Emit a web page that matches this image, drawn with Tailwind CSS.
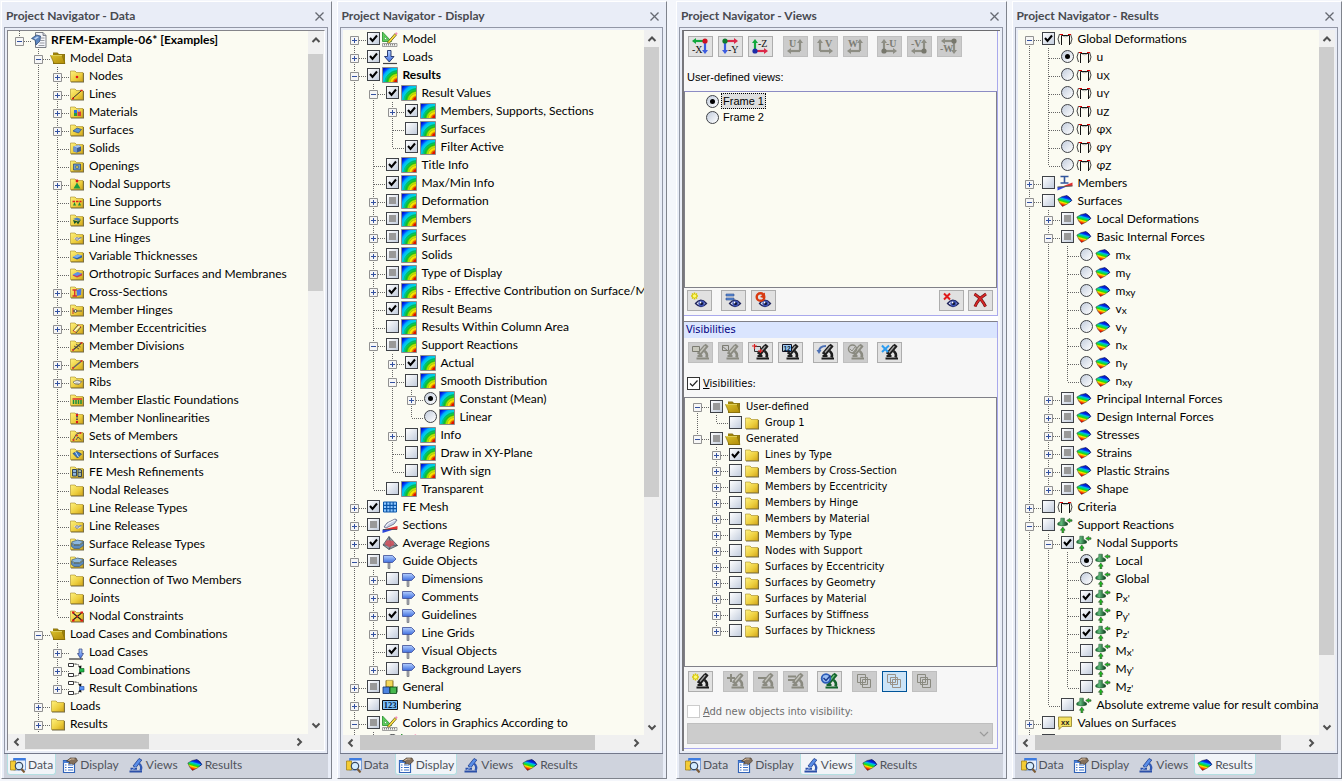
<!DOCTYPE html>
<html lang="en">
<head>
<meta charset="utf-8">
<title>Project Navigator</title>
<script src="https://cdn.jsdelivr.net/npm/@tailwindcss/browser@4"></script>
</head>
<body class="flex h-screen min-h-[400px] gap-2 overflow-hidden bg-[#f4f6fb] pt-px pb-[2px] font-['Lato',sans-serif] text-[12px] text-black">

<svg class="absolute h-0 w-0" aria-hidden="true">
  <defs>
    <linearGradient id="gFold" x1="0" y1="0" x2="1" y2="1"><stop offset="0" stop-color="#fff27e"/><stop offset=".6" stop-color="#eccd3c"/><stop offset="1" stop-color="#d0a41c"/></linearGradient>
    <linearGradient id="gOpen" x1="0" y1="0" x2="1" y2="1"><stop offset="0" stop-color="#d9c02a"/><stop offset="1" stop-color="#b08a08"/></linearGradient>
    <radialGradient id="gRain" gradientUnits="userSpaceOnUse" cx="16" cy="16" r="20"><stop offset=".18" stop-color="#e01000"/><stop offset=".24" stop-color="#ff9000"/><stop offset=".32" stop-color="#f8e800"/><stop offset=".42" stop-color="#d8e800"/><stop offset=".5" stop-color="#30d010"/><stop offset=".6" stop-color="#00c860"/><stop offset=".68" stop-color="#00d8d8"/><stop offset=".8" stop-color="#00b0ff"/><stop offset=".88" stop-color="#0050ff"/><stop offset="1" stop-color="#0010d0"/></radialGradient>
    <linearGradient id="gLeaf" x1=".66" y1="0" x2=".3" y2="1"><stop offset=".14" stop-color="#0018d8"/><stop offset=".26" stop-color="#0040f0"/><stop offset=".34" stop-color="#00b8e8"/><stop offset=".46" stop-color="#00d870"/><stop offset=".56" stop-color="#30d800"/><stop offset=".66" stop-color="#f8e800"/><stop offset=".78" stop-color="#ff6000"/><stop offset=".9" stop-color="#e80000"/></linearGradient>
    <linearGradient id="gBlue" x1="0" y1="0" x2="0" y2="1"><stop offset="0" stop-color="#b4d0ff"/><stop offset="1" stop-color="#3f6ede"/></linearGradient>
    <linearGradient id="gGreen" x1="0" y1="0" x2="1" y2="0"><stop offset="0" stop-color="#1c7438"/><stop offset=".35" stop-color="#62bc7c"/><stop offset="1" stop-color="#0c3c1c"/></linearGradient>
  </defs>
  <symbol id="fold" viewBox="0 0 16 16"><path d="M2 14.500V3.500h4.500l1.500 1.500h7v9.500z" fill="#6f6746"/><path d="M1.500 13.500V3h4.500l1.500 1.500h6.500v9z" fill="url(#gFold)" stroke="#a58a26" stroke-width=".6"/></symbol>
  <symbol id="open" viewBox="0 0 16 16"><path d="M3 14V2.500h4.500L9 4h6v10z" fill="#85701a"/><path d="M3 3h4l1.500 1.500H14L15 13H4z" fill="#9d8208"/><path d="M.5 5.500h11.500L15 13.500H4z" fill="url(#gOpen)" stroke="#7d6606" stroke-width=".6"/><path d="M1 5.500h11" stroke="#efe26a" stroke-width=".8"/></symbol>
  <symbol id="rain" viewBox="0 0 16 16"><path d="M.5.5h15v15H.5z" fill="url(#gRain)" stroke="#8c8c8c"/><path d="M2.500 15A14 13 0 0 1 15 3.500M5 15A11 10 0 0 1 15 6M8 15a8 7.500 0 0 1 7-6.500" fill="none" stroke="#065c50" stroke-width=".5" opacity=".5"/><path d="M11 15a5 4.500 0 0 1 4-3.500" fill="none" stroke="#9a5200" stroke-width=".6" opacity=".7"/></symbol>
  <symbol id="leaf" viewBox="0 0 16 16"><path d="M.8 6Q5 2.800 9.500 2.500 13 4 14.700 7.500 10.500 11.500 5.500 13.500 2.200 10.500.8 6z" fill="url(#gLeaf)" stroke="#38382c" stroke-width=".5"/><path d="M9.500 2.500Q13 4 14.700 7.500L12.500 9.300" fill="none" stroke="#0a1a90" stroke-width=".9"/></symbol>
  <symbol id="model" viewBox="0 0 16 16"><path d="M.5 1v9.500h9z" fill="#5ccf5a" stroke="#238a28" stroke-width=".8"/><path d="M2.500 5.500v3h3z" fill="#fff" stroke="#238a28" stroke-width=".5"/><path d="M6 10.500 13 2.500l1.500 1.500-7 8-2 .8z" fill="#ffe23e" stroke="#4c400e" stroke-width=".7"/><path d="m13 2.500 1-1.200q1.500 0 1.600 1.500l-1 1.200z" fill="#f78bb8"/><path d="M.5 12.500h14.500v3H.5z" fill="#f0f0ec" stroke="#7c7c7c" stroke-width=".7"/><path d="M2.500 13v1.500m2-1.500v1.500m2-1.500v1.500m2-1.500v1.500m2-1.500v1.500m2-1.500v1.500" stroke="#555" stroke-width=".7"/></symbol>
  <symbol id="loads" viewBox="0 0 16 16"><path d="M5.500 1.500h3.500v6h3l-4.700 5.500L2.500 7.500h3z" fill="url(#gBlue)" stroke="#1c2e66" stroke-width=".9"/><path d="M1 14.500h14" stroke="#444" stroke-width="1.200"/></symbol>
  <symbol id="mesh" viewBox="0 0 16 16"><path d="M1.500 3h13v10h-13z" fill="#8fc8ff" stroke="#0a56a8"/><path d="M4.700 3v10m3.300-10v10m3.200-10v10M1.500 6.300h13m-13 3.300h13" stroke="#0a56a8" stroke-width="1.200"/></symbol>
  <symbol id="sect" viewBox="0 0 16 16"><path d="m2 10 3-4 8-4 2 1-3 4-8 4z" fill="#c8d0e8" stroke="#5a607c" stroke-width=".8"/><path d="m4 9.500 2-3 7-3.500" fill="none" stroke="#fff"/><path d="M1 12.500 15.500 9v3.500z" fill="#e03030"/><path d="M.5 16v-3.500h11z" fill="#2c48d8"/><path d="M1 12.500h14" stroke="#333" stroke-width=".7"/></symbol>
  <symbol id="avg" viewBox="0 0 16 16"><path d="M7 1.500 1 10l6 4.500 8.500-4z" fill="#8e98a4" stroke="#39424c" stroke-width=".7"/><path d="m7 1.500 2 8.500-2 4.500M1 10l8 0 6.500.5" fill="none" stroke="#39424c" stroke-width=".7"/><path d="m4.500 5.500 3-.2 4 1 .8 3.500-5 2.500-4.500-3z" fill="#d4505c" opacity=".85"/></symbol>
  <symbol id="sign" viewBox="0 0 16 16"><path d="M6 8h2v7.500H6z" fill="#a8acb4" stroke="#62666e" stroke-width=".6"/><path d="M1.500 2.500h9l3.500 3.500-3.500 3.500h-9z" fill="url(#gBlue)" stroke="#3c4c94" stroke-width=".8"/></symbol>
  <symbol id="general" viewBox="0 0 16 16"><path d="M4 1.500h7v6.500H4z" fill="#f4d858" stroke="#6a5408" stroke-width=".8"/><path d="m4 1.500 1.500-1h7l-1.500 1z" fill="#fff3a8"/><path d="M1 8h6.500v6.500H1z" fill="#4c84e0" stroke="#12306e" stroke-width=".8"/><path d="M8 8h6.500v6.500H8z" fill="#46b84e" stroke="#0e4c18" stroke-width=".8"/><path d="M14.500 8l1-1v6l-1 1.500z" fill="#0e4c18"/></symbol>
  <symbol id="num" viewBox="0 0 16 16"><path d="M.5 3.500h15v9H.5z" fill="#7cc0f8" stroke="#111" stroke-width="1"/></symbol>
  <symbol id="deform" viewBox="0 0 16 16"><path d="M4.500 14V4.500h8V14" fill="none" stroke="#111"/><path d="M2.500 3Q-.5 8 2.500 13M13.500 3q3 5 0 10" fill="none" stroke="#333" stroke-width=".9"/><path d="M6 5.200Q8.500 6.500 11 5.200" fill="none" stroke="#777" stroke-width=".6"/><path d="M3 3.500h3M11 3.500h3" stroke="#e00000"/></symbol>
  <symbol id="memb" viewBox="0 0 16 16"><path d="M3.500 1.500h8m-4 0v6m-4 .5h8" stroke="#31559c" stroke-width="1.600" fill="none"/><path d="M15.500 7.500v3.500h-9z" fill="#e03030"/><path d="M.5 15.500V12h8z" fill="#3048e0"/><path d="M.5 12 15.500 11" stroke="#555"/></symbol>
  <symbol id="supp" viewBox="0 0 16 16"><path d="M3.800 1.200h3.600v3L10.500 6v2Q6 10 .8 8V6l3-1.800z" fill="url(#gGreen)" stroke="#174c24" stroke-width=".5"/><path d="M15 2.800h-2.200V1.400L9.700 3.500l3.100 2.100V4.300H15z" fill="#18c018" stroke="#3c5c3c" stroke-width=".7"/><path d="M5 16v-2.800H3.500L5.800 10l2.300 3.200H6.700V16z" fill="#18c018" stroke="#3c5c3c" stroke-width=".7"/></symbol>
  <symbol id="vals" viewBox="0 0 16 16"><path d="M1.500 2h13v9.500H5L2 14.500v-3h-.5z" fill="#f4e060" stroke="#8c7c24" stroke-width=".8"/></symbol>
  <symbol id="root" viewBox="0 0 16 16"><path d="M4.500.5h7.500l3 3v12H4.500z" fill="#f4f6fa" stroke="#6c7078" stroke-width=".9"/><path d="M12 .5v3h3" fill="#c8ccd4" stroke="#6c7078" stroke-width=".8"/><path d="M10 6h3.500m-4 2.500h4m-5 2.500h5m-6 2.500h6" stroke="#80848c" stroke-width=".8"/><path d="m.5 6.500 5-3.500 4 1-.5 5-4 4-1-5z" fill="#5c86c0" stroke="#2c4670" stroke-width=".7"/><path d="m3 6.500 3-2 2 .5-3.500 2.500z" fill="#bcd4f4"/></symbol>
  <symbol id="lcase" viewBox="0 0 16 16"><path d="M0 15h14" stroke="#333" stroke-width="1.200"/><path d="M10 5h3v4.500h1.500L11.500 14.500 8.500 9.500H10z" fill="url(#gBlue)" stroke="#2c3c78" stroke-width=".7"/></symbol>
  <symbol id="lcomb" viewBox="0 0 16 16" overflow="visible"><path d="M-.5 1.500h5v3h-5zm0 10h5v3h-5z" fill="#fff" stroke="#222" stroke-width=".9"/><path d="M5.500 2q5 0 6 4M5.500 14q5 0 6-4" fill="none" stroke="#222" stroke-dasharray="2 1"/><path d="m9 4.500 3 2.500.5-3.500zm0 7L12 9l.5 3.500z" fill="#111"/><path d="M10.500 6.500h4.500v3.500h-4.500z" fill="#22b84a" stroke="#0a5a1c" stroke-width=".6"/></symbol>
  <symbol id="rcomb" viewBox="0 0 16 16" overflow="visible"><path d="M-.5 1.500h5v3h-5zm0 10h5v3h-5z" fill="#fff" stroke="#222" stroke-width=".9"/><path d="M5.500 2q5 0 6 4M5.500 14q5 0 6-4" fill="none" stroke="#222" stroke-dasharray="2 1"/><path d="m9 4.500 3 2.500.5-3.500zm0 7L12 9l.5 3.500z" fill="#111"/><path d="M10.500 6.500h4.500v3.500h-4.500z" fill="#5c94f4" stroke="#1c44a0" stroke-width=".6"/></symbol>
  <symbol id="tabData" viewBox="0 0 16 16"><path d="M3.500 1.500h12V13h-12z" fill="#eaf1fc" stroke="#5a8ad0" stroke-width=".8"/><path d="M3.500 1h12v2.500h-12z" fill="#3d7be0"/><path d="M.5 4h5v9h-5z" fill="#f4cc34" stroke="#9c7a10" stroke-width=".7"/><circle cx="9" cy="9" r="3.700" fill="#d4ecff" stroke="#3a4a62" stroke-width="1.200"/><path d="m11.500 12 3 3.500" stroke="#7c5a34" stroke-width="2"/></symbol>
  <symbol id="tabDisp" viewBox="0 0 16 16"><path d="M1.500 3.500h11v12h-11z" fill="#fff" stroke="#3264b8" stroke-width="1.200"/><path d="M1.500 4h11v2h-11z" fill="#4a80d8"/><path d="M3 8h1.500M6 8h5M3 10.500h1.500m1.500 0h5M3 13h1.500m1.500 0h5" stroke="#3c70c8"/><path d="m4.500 4 4-3 5.500 0 1.500 3-4 3.500-2-1-3 .5 1.500-2z" fill="#84705c" stroke="#3c3024" stroke-width=".6"/><path d="m6.500 3.500 3-1.500h3" fill="none" stroke="#d8bea0"/></symbol>
  <symbol id="tabView" viewBox="0 0 16 16"><path d="M5 9 11 1.500 13.800 3 8 10.500z" fill="#5a8ee8" stroke="#1e3c8c" stroke-width=".8"/><path d="M11 6.500q3.500 3 1.500 7" fill="none" stroke="#3058b4" stroke-width="2.200"/><path d="M1.500 14.500h12.500M2.500 11.800h6.500" stroke="#2c50a8" stroke-width="2"/><path d="m4 13 4-3" stroke="#88b0f0"/></symbol>
</svg>

<script>
/* ---------- folder overlays ---------- */
const overlays = {
  node: '<circle cx="8" cy="9" r="1.300" fill="#e01818"/>',
  line: '<path d="M4 12 12 5" stroke="#333"/><path d="M3 12.500h2M11.500 4.500h2" stroke="#e01818" stroke-width="1.600"/>',
  mat: '<path d="M5 6h3v3H5z" fill="#2c6ce0"/><path d="M5 9h3v3H5z" fill="#2c9c3c"/><path d="M8.500 7.500h3.500V12H8.500z" fill="#d83c3c"/><path d="M9 5.500h2v2H9z" fill="#7cb8f8"/>',
  surf: '<path d="m4 9 4-3 4.500 1.500L9.500 11z" fill="#5a94d8" stroke="#2c4c80" stroke-width=".7"/>',
  solid: '<path d="m4.500 6.500 5-1.500 2.500 1.500V11l-4 1.500-3.500-1z" fill="#3c5c94"/><path d="m4.500 6.500 5-1.500 2.500 1.500-4 1.500z" fill="#a8c4f0"/><path d="M8 8v4.500l-3.500-1v-5z" fill="#6c94d0"/>',
  opening: '<path d="M4.500 6h7v6h-7z" fill="#6c9cd4" stroke="#2c4468" stroke-width=".7"/><path d="M6.800 7.800h2.500v2.500H6.800z" fill="#f0dc5c" stroke="#2c4468" stroke-width=".6"/>',
  nsup: '<path d="M8 6.500 11.500 12.500h-7z" fill="#1c9c44"/><circle cx="8" cy="5" r="1.400" fill="#e01818"/>',
  lsup: '<path d="M3.500 7.500h9" stroke="#d82020" stroke-width="1.300" stroke-dasharray="2.500 1"/><path d="m5.500 8 1.500 3.500H4zM10.500 8l1.500 3.500H9z" fill="#1c8c3c"/>',
  ssup: '<path d="m4 7 4-1.500 4 1.500-2.500 2z" fill="#4c80c0"/><path d="m4 8 1.500 4 2-2 1.500 2.500L12 7.500 9 9.500z" fill="#14542c"/>',
  hinge: '<path d="m4.500 8 4-1 4 2-4 2z" fill="#dce0e8"/><circle cx="8" cy="9" r="1.300" fill="#fff" stroke="#556" stroke-width=".7"/><path d="m9.500 8.500 3-1" stroke="#5a7cc0" stroke-width="1.200"/>',
  thick: '<path d="m3.500 9.500 5-3 4.500 1v2L8 11.500z" fill="#2c60a8"/><path d="m3.500 9 5-2.500L13 7.500 8 10z" fill="#7cb0f0"/>',
  ortho: '<path d="m3.500 9.500 5-3 4.500 1v2L8 11.500z" fill="#c83c58"/><path d="m3.500 8.500 5-2.500L13 7.500 8 10z" fill="#5c94e8"/>',
  cross: '<path d="M3.500 6h4.500M5.700 6v5.500M3.500 12h4.500" stroke="#d83030" stroke-width="1.300"/><path d="m7.500 6 5-1.500-.5 6.500-4 1z" fill="#4c78e0"/>',
  mhinge: '<path d="M4 6v6" stroke="#c83030"/><path d="M4 9h9" stroke="#555"/><circle cx="6.500" cy="9" r="1.400" fill="#fff" stroke="#333" stroke-width=".8"/>',
  mecc: '<path d="m4 11 5-6M7 13l5-6" stroke="#555"/><path d="m4 10.500 3 2M9 5l3 2" stroke="#d83030" stroke-width=".8"/><path d="m5.500 11 5-5" stroke="#fff8d0" stroke-width="1.500"/>',
  mdiv: '<path d="m4 12 8.500-7" stroke="#444" stroke-width="1.400"/><path d="m5 8 5 3M7 6l4.500 3" stroke="#444" stroke-width=".8"/><circle cx="4" cy="12" r="1" fill="#d83030"/><circle cx="12.500" cy="5" r="1" fill="#d83030"/>',
  mem: '<path d="m4 12 8.500-7" stroke="#666" stroke-width="1.600"/><circle cx="4" cy="12" r="1" fill="#d83030"/><circle cx="12.500" cy="5" r="1" fill="#d83030"/>',
  rib: '<path d="m4 8 4-2 5 1.500-3 3-4-.500z" fill="#b8b8a8" stroke="#666" stroke-width=".6"/><path d="M5 8.500q3-1.500 6 0" stroke="#fff" fill="none"/>',
  found: '<path d="M3.500 7h9.500" stroke="#d83030" stroke-width="1.500"/><path d="M4.500 8v4M7 8v4M9.500 8v4M12 8v4" stroke="#1c8c3c" stroke-width="1.500"/>',
  nonlin: '<path d="M8 3.500v10" stroke="#446" stroke-width="1.800" stroke-dasharray="1.500 1"/><circle cx="8" cy="5" r="1.200" fill="#e01818"/><circle cx="8" cy="12" r="1.200" fill="#e01818"/>',
  sets: '<path d="m4 12 3.500-6L12 4.500M7 12l2-3 3.500 3" fill="none" stroke="#555"/><circle cx="4.500" cy="12" r="1.100" fill="#d83030"/><circle cx="11.500" cy="5" r="1.100" fill="#d83030"/><circle cx="8" cy="7.500" r="1" fill="#d83030"/>',
  inter: '<path d="m4 7.500 4-2 4.500 2.500-4 4z" fill="#3c78c0" stroke="#1c3c70" stroke-width=".7"/><path d="m6.500 6 3 5" stroke="#bfe0ff"/>',
  femesh: '<path d="M3.500 5.500h4v6.500h-4z" fill="#8cb4dc" stroke="#345"/><path d="m9 5 3.500 1v6.500H9z" fill="#a8b8a0" stroke="#345"/><path d="M3.500 8.500h4M9 8.500h3.500" stroke="#345" stroke-width=".8"/>',
  srel: '<path d="m2.500 6 6-2 6 1.500-4 3H5z" fill="#8cb8e0" stroke="#3c5c80" stroke-width=".7"/><path d="M2.500 7 5 9.500h5.500l4-3v3l-4 3H5l-2.500-2z" fill="#5c8cc0" stroke="#3c5c80" stroke-width=".7"/>',
  cons: '<path d="m4 5 8.500 7M4 12l8.500-7" stroke="#222" stroke-width="1.100"/><path d="M3 4.500h2.500m6 0H14M3 12.500h2.500m6 0H14M7.500 8.500h1.500" stroke="#e01818" stroke-width="2"/>'
};
/* lettering drawn over the plain numbering and values icons */
const lettering = {
  num: '<text x="8" y="11" text-anchor="middle" font-family="Liberation Serif" font-size="8.500" font-weight="bold" fill="#041a40">123</text>',
  vals: '<text x="8.200" y="9.500" text-anchor="middle" font-family="Liberation Sans" font-size="7.500" font-weight="bold" fill="#222">xx</text>'
};
const icon = n => `<svg class="h-4 w-4 shrink-0 overflow-visible self-center" viewBox="0 0 16 16" aria-hidden="true"><use href="#${overlays[n] ? 'fold' : n}" width="16" height="16"/>${overlays[n] || lettering[n] || ''}</svg>`;

/* ---------- tree ---------- */
let uid = 0;
const boxCtl = (kind, id, group) => {
  const radio = kind === 'r' || kind === 'o';
  if (radio) return `<span class="grid h-[13px] w-[13px] shrink-0"><input type="radio" id="${id}" name="${group}" ${kind === 'r' ? 'checked' : ''} class="peer col-start-1 row-start-1 h-[13px] w-[13px] appearance-none rounded-full border border-[#3f4247] bg-gradient-to-br from-[#c3cddd] to-white"><i class="pointer-events-none col-start-1 row-start-1 hidden h-[5px] w-[5px] place-self-center rounded-full bg-black peer-checked:block"></i></span>`;
  return `<span class="grid h-[13px] w-[13px] shrink-0"><input type="checkbox" id="${id}" ${kind === 'c' ? 'checked' : ''} ${kind === 'm' ? 'data-mixed' : ''} class="peer col-start-1 row-start-1 h-[13px] w-[13px] appearance-none border border-[#3f4247] bg-gradient-to-br from-white to-[#c3cddd]"><svg class="pointer-events-none col-start-1 row-start-1 hidden h-[13px] w-[13px] peer-checked:block" viewBox="0 0 13 13" aria-hidden="true"><path d="M3 6 5.500 9 10 3.500" fill="none" stroke="#000" stroke-width="2"/></svg><i class="pointer-events-none col-start-1 row-start-1 hidden h-[7px] w-[7px] place-self-center bg-[#999] peer-indeterminate:block"></i></span>`;
};

function tree(src, o) {
  const rows = src.trim().split('\n').map(l => { const [d, e, c, i, t] = l.split('|'); return { d: +d, e, c, i, t }; });
  const H = o.h, mid = H === 18 ? 10 : 8;
  const more = (k, lvl) => {
    for (let j = k + 1; j < rows.length; j++) { if (rows[j].d < lvl) return false; if (rows[j].d === lvl) return true; }
    return (o.open || []).includes(lvl);
  };
  return rows.map((r, k) => {
    const id = 'n' + (++uid);
    let cells = '';
    for (let l = 0; l <= r.d; l++) {
      const own = l === r.d, next = more(k, l);
      const top = own ? (l > 0 || k > 0 || o.above) : next;
      let p = '';
      if (top) p += `M9.500 0V${next && (!own || !r.e) ? H : mid}`;
      if (own && next && (r.e || !top)) p += `M9.500 ${mid}V${H}`;
      if (own) p += `M10 ${mid + .5}H21`;
      const btn = own && r.e ? `<button type="button" aria-label="${r.e === '+' ? 'Expand' : 'Collapse'} ${(r.t || '').replace(/<[^>]+>/g, '')}" class="col-start-1 row-start-1 h-[9px] w-[9px] justify-self-center ${H === 18 ? 'mt-[6px]' : 'mt-[4px]'} z-10"><svg class="block h-[9px] w-[9px]" viewBox="0 0 9 9" aria-hidden="true"><path d="M.5.5h8v8h-8z" fill="#f6f6f6" stroke="#919191"/><path d="M2 4.500h5${r.e === '+' ? 'M4.500 2v5' : ''}" stroke="#3351a0"/></svg></button>` : '';
      cells += `<span class="grid w-[19px] shrink-0"><svg class="col-start-1 row-start-1 h-full w-[19px] overflow-visible" viewBox="0 0 19 ${H}" aria-hidden="true"><path d="${p}" fill="none" stroke="#666" stroke-dasharray="1 1"/></svg>${btn}</span>`;
    }
    const ctl = r.c ? `<span class="ml-[3px] mr-[2px] ${H === 18 ? 'pt-[2px]' : 'pt-px'}">${boxCtl(r.c, id, 'g' + o.name + r.d)}</span>` : '<span class="w-[2px] shrink-0"></span>';
    const tag = r.c ? 'label' : 'span';
    return `<li class="flex ${H === 18 ? 'h-[18px] leading-[18px]' : 'h-4 leading-4'} whitespace-nowrap">${cells}${ctl}${icon(r.i)}<${tag} ${r.c ? `for="${id}"` : ''} class="${r.c ? 'ml-[5px]' : 'ml-1'} ${r.t && r.t.startsWith('*') ? 'font-bold' : ''}">${(r.t || '').replace('*', '').replace(/_(\S+)$/, '<sub class="static align-[-1px] text-[10px] leading-none">$1</sub>')}</${tag}></li>`;
  }).join('');
}

const dataRows = `
0|-||root|*RFEM-Example-06&#42; [Examples]
1|-||open|Model Data
2|+||node|Nodes
2|+||line|Lines
2|+||mat|Materials
2|+||surf|Surfaces
2|||solid|Solids
2|||opening|Openings
2|+||nsup|Nodal Supports
2|||lsup|Line Supports
2|||ssup|Surface Supports
2|||hinge|Line Hinges
2|||thick|Variable Thicknesses
2|||ortho|Orthotropic Surfaces and Membranes
2|+||cross|Cross-Sections
2|+||mhinge|Member Hinges
2|+||mecc|Member Eccentricities
2|||mdiv|Member Divisions
2|+||mem|Members
2|+||rib|Ribs
2|||found|Member Elastic Foundations
2|||nonlin|Member Nonlinearities
2|||sets|Sets of Members
2|||inter|Intersections of Surfaces
2|||femesh|FE Mesh Refinements
2|||fold|Nodal Releases
2|||fold|Line Release Types
2|||hinge|Line Releases
2|||srel|Surface Release Types
2|||srel|Surface Releases
2|||fold|Connection of Two Members
2|||fold|Joints
2|||cons|Nodal Constraints
1|-||open|Load Cases and Combinations
2|+||lcase|Load Cases
2|+||lcomb|Load Combinations
2|+||rcomb|Result Combinations
1|+||fold|Loads
1|+||fold|Results`;

const displayRows = `
0|+|c|model|Model
0|+|c|loads|Loads
0|-|c|rain|*Results
1|-|c|rain|Result Values
2|+|c|rain|Members, Supports, Sections
2||u|rain|Surfaces
2||c|rain|Filter Active
1||c|rain|Title Info
1||c|rain|Max/Min Info
1|+|m|rain|Deformation
1|+|m|rain|Members
1|+|m|rain|Surfaces
1|+|m|rain|Solids
1|+|m|rain|Type of Display
1|+|c|rain|Ribs - Effective Contribution on Surface/Member
1||c|rain|Result Beams
1||u|rain|Results Within Column Area
1|-|m|rain|Support Reactions
2|+|c|rain|Actual
2|-|u|rain|Smooth Distribution
3|+|r|rain|Constant (Mean)
3||o|rain|Linear
2|+|u|rain|Info
2||u|rain|Draw in XY-Plane
2||u|rain|With sign
1||u|rain|Transparent
0|+|c|mesh|FE Mesh
0|+|m|sect|Sections
0|+|c|avg|Average Regions
0|-|m|sign|Guide Objects
1|+|u|sign|Dimensions
1|+|u|sign|Comments
1|+|c|sign|Guidelines
1|+|u|sign|Line Grids
1||c|sign|Visual Objects
1|+|u|sign|Background Layers
0|+|m|general|General
0|+|u|num|Numbering
0|-|m|model|Colors in Graphics According to
1||o|model|`;

const visRows = `
0|-|m|open|User-defined
1||u|fold|Group 1
0|-|m|open|Generated
1|+|c|fold|Lines by Type
1|+|u|fold|Members by Cross-Section
1|+|u|fold|Members by Eccentricity
1|+|u|fold|Members by Hinge
1|+|u|fold|Members by Material
1|+|u|fold|Members by Type
1|+|u|fold|Nodes with Support
1|+|u|fold|Surfaces by Eccentricity
1|+|u|fold|Surfaces by Geometry
1|+|u|fold|Surfaces by Material
1|+|u|fold|Surfaces by Stiffness
1|+|u|fold|Surfaces by Thickness`;

const resultRows = `
0|-|c|deform|Global Deformations
1||r|deform|u
1||o|deform|u_X
1||o|deform|u_Y
1||o|deform|u_Z
1||o|deform|φ_X
1||o|deform|φ_Y
1||o|deform|φ_Z
0|+|u|memb|Members
0|-|u|leaf|Surfaces
1|+|m|leaf|Local Deformations
1|-|m|leaf|Basic Internal Forces
2||o|leaf|m_x
2||o|leaf|m_y
2||o|leaf|m_xy
2||o|leaf|v_x
2||o|leaf|v_y
2||o|leaf|n_x
2||o|leaf|n_y
2||o|leaf|n_xy
1|+|m|leaf|Principal Internal Forces
1|+|m|leaf|Design Internal Forces
1|+|m|leaf|Stresses
1|+|m|leaf|Strains
1|+|m|leaf|Plastic Strains
1|+|m|leaf|Shape
0|+|u|deform|Criteria
0|-|u|supp|Support Reactions
1|-|c|supp|Nodal Supports
2||r|supp|Local
2||o|supp|Global
2||c|supp|P_x'
2||c|supp|P_y'
2||c|supp|P_z'
2||u|supp|M_x'
2||u|supp|M_y'
2||u|supp|M_z'
1||u|supp|Absolute extreme value for result combinations
0|+|u|vals|Values on Surfaces
0||u|fold|`;

/* ---------- scroll bars ---------- */
const chev = { up: 'M1.500 7 5 3.500 8.500 7', down: 'M1.500 3.500 5 7l3.500-3.500', left: 'M6.500 1.500 3 5l3.500 3.500', right: 'M3.500 1.500 7 5 3.500 8.500' };
const arrow = d => `<button type="button" aria-label="Scroll ${d}" class="grid h-[17px] w-[17px] shrink-0 place-items-center self-center"><svg class="h-[10px] w-[10px]" viewBox="0 0 10 10" aria-hidden="true"><path d="${chev[d]}" fill="none" stroke="#505050" stroke-width="2"/></svg></button>`;
const vbar = ([a, b, c]) => `<div class="flex w-4 shrink-0 flex-col bg-[#f0f0f0]">${arrow('up')}<i style="flex-grow:${a}"></i><i class="mr-px bg-[#cdcdcd]" style="flex-grow:${b}"></i><i style="flex-grow:${c}"></i>${arrow('down')}</div>`;
const hbar = ([b, c]) => `<div class="flex h-4 min-w-0 flex-1 bg-[#f0f0f0]">${arrow('left')}<i class="mb-px bg-[#c8c8c8]" style="flex-grow:${b}"></i><i style="flex-grow:${c}"></i>${arrow('right')}</div>`;
const scroller = (rows, v, h, cls) => `<div class="flex min-h-0 flex-1 flex-col bg-[#fbfbf2] ${cls}"><div class="flex min-h-0 flex-1"><ul class="min-w-0 flex-1 overflow-hidden pl-[2px]">${rows}</ul>${vbar(v)}</div><div class="flex bg-[#f0f0f0]">${hbar(h)}<i class="w-4 shrink-0"></i></div></div>`;

/* ---------- tool bars ---------- */
const tool = (label, art, mode) => `<button type="button" aria-label="${label}" ${mode === 'off' ? 'disabled' : ''} class="h-[21px] w-[25px] shrink-0 border ${mode === 'off' ? 'border-[#bfbfbf] bg-[#cccccc]' : mode === 'on' ? 'border-[#005499] bg-[#cce4f7]' : 'border-[#adadad] bg-[#e1e1e1]'}"><svg class="block h-[19px] w-[23px]" viewBox="0 0 23 19" aria-hidden="true">${art}</svg></button>`;
const arr = (x1, y1, x2, y2, c) => {
  const dx = Math.sign(x2 - x1), dy = Math.sign(y2 - y1);
  return `<path d="M${x1} ${y1}L${x2 - 3 * dx} ${y2 - 3 * dy}" stroke="${c}" stroke-width="2.200"/><path d="M${x2} ${y2}L${x2 - 4 * dx + 3 * dy} ${y2 - 4 * dy + 3 * dx}L${x2 - 4 * dx - 3 * dy} ${y2 - 4 * dy - 3 * dx}z" fill="${c}"/>`;
};
const G = '#12a83c', R = '#dc2848', B = '#3c5ce0', K = '#8e8e84';
const axis = (right, up, text, tx, ty, ch, cv, cb) => {
  const ox = right ? 6 : 16, oy = up ? 14 : 4;
  return arr(ox, oy, right ? 19 : 3, oy, ch) + arr(ox, oy, ox, up ? 2 : 17, cv) + (cb ? `<circle cx="${ox}" cy="${oy}" r="2.600" fill="${cb}"/>` : '') +
    `<text x="${tx}" y="${ty}" font-family="Liberation Serif" font-size="10" font-weight="${ch === K ? 'bold' : 'normal'}" fill="${ch === K ? '#7c7c74' : '#111'}">${text}</text>`;
};
const scope = (c, c2) => `<path d="M10.500 10.500 17 3" stroke="${c}" stroke-width="4.500"/><path d="m11 9.500 5.500-6.500" stroke="${c2}" stroke-width="1.300"/><path d="m16 1.500 3 2.500M8.500 9.500l4 3" stroke="${c}" stroke-width="1.800"/><path d="M15.500 8q3.500 2.500 2 6.500" fill="none" stroke="${c}" stroke-width="2.600"/><path d="M7.500 15.500h12.500M8.500 13h5" stroke="${c}" stroke-width="2"/>`;
const SC = scope('#1c1c1c', '#a4a4a4'), SG = scope('#8a8a80', '#c4c4bc'), SGR = scope('#14642c', '#70c080');
const eye = '<g transform="translate(1 .500)"><path d="M6.500 12q5-6.500 11 0-5.500 6-11 0z" fill="#dce2f4" stroke="#20245c" stroke-width="1.300"/><circle cx="12.500" cy="12" r="3.100" fill="#3c50b0"/><circle cx="12.500" cy="12" r="1.500" fill="#0c1030"/><circle cx="11.500" cy="11" r=".9" fill="#fff"/></g>';
const star = '<path d="M6.500 1.500v7M3 5h7M4 2.500l5 5M9 2.500l-5 5" stroke="#d8c800" stroke-width="1.500"/><circle cx="6.500" cy="5" r="1.700" fill="#fffb70"/>';
const stack = c => `<path d="M4.500 2.500h8v8h-8zM9.500 7.500h8v8h-8zM7.500 5.500h7v7h-7z" fill="none" stroke="${c}"/>`;
const gap = n => `<i class="${n === 5 ? 'w-[5px]' : n === 10 ? 'w-[10px]' : 'w-[9px]'} shrink-0"></i>`;

const bar1 = tool('View in -X', axis(0, 0, '-X', 3, 16, G, B, '#d01020')) + gap(5) + tool('View in -Y', axis(1, 0, '-Y', 9, 16, R, B, '#0c7c2c')) + gap(5) + tool('View in -Z', axis(1, 1, '-Z', 9, 10, R, G, '#1c2ca8')) + gap(10)
  + tool('View in U', axis(0, 1, 'U', 5, 10, K, K), 'off') + gap(5) + tool('View in V', axis(1, 1, 'V', 11, 10, K, K), 'off') + gap(5) + tool('View in W', axis(0, 1, 'W', 4, 10, K, K), 'off') + gap(9)
  + tool('View in -U', axis(1, 1, '-U', 8, 10, K, K, '#77776c'), 'off') + gap(5) + tool('View in -V', axis(0, 1, '-V', 3, 10, K, K, '#77776c'), 'off') + gap(5) + tool('View in -W', axis(0, 0, '-W', 2, 15, K, K, '#77776c'), 'off');
const bar2 = tool('New view', eye + star) + gap(9) + tool('Rename view', eye + '<path d="M4 3h8v2H4zM4 7h8v2H4z" fill="#5a8cd8" stroke="#2c4c8c" stroke-width=".6"/>') + gap(5) + tool('Update view', eye + '<circle cx="8.500" cy="6" r="3.800" fill="none" stroke="#d83a10" stroke-width="2.400"/><path d="m8 6 5-4.500v6z" fill="#d83a10"/>');
const bar2b = tool('Delete view', eye + '<path d="m4 2.500 6 6m0-6-6 6" stroke="#e01818" stroke-width="2"/>') + '<i class="w-1 shrink-0"></i>' + tool('Delete all views', '<path d="M5.500 3Q13 8 16.500 15.500M17 3Q9 8 6 15.500" fill="none" stroke="#6a1010" stroke-width="3"/><path d="M5.500 3Q13 8 16.500 15.500M17 3Q9 8 6 15.500" fill="none" stroke="#d82828" stroke-width="1.600"/>');
const bar3 = tool('Visibility by window', SG + '<path d="M3.500 3.500h7v5h-7z" fill="#c8c8bc" stroke="#7c7c72"/>', 'off') + gap(5) + tool('Cancel visibility by window', SG + '<path d="M3.500 2.500h6v5h-6z" fill="none" stroke="#7c7c72"/><path d="m3 3 6 5" stroke="#7c7c72"/>', 'off') + gap(5)
  + tool('Visibility by selection', SC + '<path d="M5.500 3.500h6v5h-6z" fill="#d8dce0" stroke="#333"/><path d="M3 3h5M5.500 1v5M9 8h5M11.500 6v4" stroke="#e02020" stroke-width="1.200"/>') + gap(5) + tool('Visibility by number', SC + '<path d="M3.500 1.500h9v7h-9z" fill="#9cc8f4" stroke="#112"/><text x="4.500" y="7.500" font-family="Liberation Sans" font-size="6.500" font-weight="bold" fill="#023">12</text>') + gap(10)
  + tool('Previous visibility', SC + '<path d="M5 9Q5 3 12 3" fill="none" stroke="#4c70b4" stroke-width="2"/><path d="m2.500 7 5 0-2.500 4z" fill="#4c70b4"/>') + gap(5) + tool('Invert visibility', SG + '<circle cx="8.500" cy="6" r="4" fill="none" stroke="#8a8a80" stroke-width="1.500"/><path d="m6 6 2 2 3-4" fill="none" stroke="#8a8a80"/>', 'off') + gap(9) + tool('Cancel visibility', SC + '<path d="m4 2.500 6 6.500m1-6.500-7 6.500" stroke="#2c9cf0" stroke-width="2"/>');
const bar4 = tool('New visibility', SC + star) + gap(10) + tool('Add to visibility', SG + '<path d="M7 2v8M3 6h8" stroke="#8a8a80" stroke-width="2"/>', 'off') + gap(5) + tool('Remove from visibility', SG + '<path d="M4 6h8" stroke="#8a8a80" stroke-width="2"/>', 'off') + gap(5) + tool('Assign to visibility', SG + '<path d="M4 4.500h8M4 8h7" stroke="#8a8a80" stroke-width="2"/>', 'off') + gap(9)
  + tool('Update generated', SGR + '<circle cx="8" cy="6.500" r="4.300" fill="#9cc0f4" stroke="#2c5cb8" stroke-width="1.800"/><path d="m5.500 6 2.500 2.500 4.500-5" fill="none" stroke="#1c3c90" stroke-width="1.500"/>') + gap(10)
  + tool('Union', stack('#8a8a80'), 'off') + gap(5) + tool('Intersection', stack('#9a9288'), 'on') + gap(5) + tool('Difference', stack('#8a8a80'), 'off');

const views = `
<div class="flex min-h-0 flex-1 flex-col border-t border-l-2 border-t-[#6c6c70] border-l-[#77777c] bg-[#f7f7f7] pr-[2px] pb-[2px] font-['DejaVu_Sans_Condensed',sans-serif] text-[11px]">
  <div class="flex flex-col border-r border-b border-[#a9a9ec]">
    <div class="flex px-1 pt-[5px]">${bar1}</div>
    <h3 class="mt-3 mb-[5px] px-[3px] font-['Liberation_Sans',sans-serif] leading-[17px]">User-defined views:</h3>
    <fieldset aria-label="User-defined views" class="h-[197px] border border-[#808088] border-t-[#8c8cc4] bg-[#fbfbf2] pt-px pl-[21px] font-['Liberation_Sans',sans-serif]">
      <div class="flex h-4 items-center">${boxCtl('r', 'frame1', 'frames')}<label for="frame1" class="ml-[2px] border border-dotted border-black bg-[#dedede] px-px leading-[14px]">Frame 1</label></div>
      <div class="flex h-4 items-center">${boxCtl('o', 'frame2', 'frames')}<label for="frame2" class="ml-[2px] px-[2px] leading-[14px]">Frame 2</label></div>
    </fieldset>
    <div class="flex justify-between pt-[2px] pr-1 pb-1 pl-[3px]"><div class="flex">${bar2}</div><div class="flex">${bar2b}</div></div>
  </div>
  <div class="h-[5px] bg-white"></div>
  <div class="flex min-h-0 flex-1 flex-col border-t border-r border-b border-t-[#808088] border-r-[#a9a9ec] border-b-[#a9a9ec]">
    <h3 class="bg-[#dae5fe] px-[2px] leading-4 text-[#000080]">Visibilities</h3>
    <div class="flex px-1 pt-1">${bar3}</div>
    <div class="flex h-[34px] items-end gap-[3px] px-[3px] pb-[7px]">
      <span class="grid h-[13px] w-[13px]"><input id="vis" type="checkbox" checked class="peer col-start-1 row-start-1 h-[13px] w-[13px] appearance-none border border-[#333] bg-white"><svg class="pointer-events-none col-start-1 row-start-1 hidden h-[13px] w-[13px] peer-checked:block" viewBox="0 0 13 13" aria-hidden="true"><path d="M3 6.500 5.500 9 10.500 3.500" fill="none" stroke="#222" stroke-width="1.200"/></svg></span>
      <label for="vis" class="leading-[13px]"><u>V</u>isibilities:</label>
    </div>
    <ul class="min-h-0 flex-1 overflow-hidden border border-[#808088] bg-[#fbfbf2] pt-px pl-[3px]">${tree(visRows, { h: 16, name: 'v' })}</ul>
    <div class="flex px-1 pt-1">${bar4}</div>
    <div class="mt-[13px] flex h-[13px] items-center gap-[3px] px-[3px]">
      <input id="addnew" type="checkbox" disabled class="h-[13px] w-[13px] appearance-none border border-[#cccccc] bg-white">
      <label for="addnew" class="leading-[13px] text-[#6d6d6d]"><u>A</u>dd new objects into visibility:</label>
    </div>
    <div class="mt-[5px] mr-1 mb-1 ml-[3px] grid">
      <select disabled aria-label="Visibility" class="col-start-1 row-start-1 h-[21px] w-full appearance-none border border-[#bfbfbf] bg-[#cccccc]"></select>
      <svg class="pointer-events-none col-start-1 row-start-1 mr-1 h-[10px] w-[10px] self-center justify-self-end" viewBox="0 0 10 10" aria-hidden="true"><path d="m1 3 4 4 4-4" fill="none" stroke="#9a9a9a" stroke-width="1.200"/></svg>
    </div>
  </div>
</div>`;

/* ---------- panels ---------- */
const tabDefs = [['Data', 'tabData'], ['Display', 'tabDisp'], ['Views', 'tabView'], ['Results', 'leaf']];
const tabs = active => `<nav class="flex h-[25px] items-start gap-[3px] border-t border-[#73788a] bg-[#cfd3dd] pl-[3px]">` + tabDefs.map(([t, i]) =>
  `<button type="button" class="flex h-[21px] items-center gap-[2px] rounded-b-[3px] border border-t-0 px-[2px] pt-[2px] leading-[18px] text-[#4f535c] ${t === active ? 'border-[#b4dfe2] bg-[#f1f4f8]' : 'border-transparent'}">${icon(i)}<span>${t}</span></button>`).join('') + '</nav>';
const panel = (name, body) => `
<section class="ml-px flex min-w-0 flex-1 flex-col border border-t-white border-l-white border-r-[#7f838c] border-b-[#7f838c] bg-[#e9edf7] pr-[3px] pl-[2px]">
  <header class="flex h-[25px] items-center justify-between pt-[3px] pr-1 pl-[2px]"><h2 class="font-bold leading-[18px] text-[#484a50]">Project Navigator - ${name}</h2>
    <button type="button" aria-label="Close ${name}"><svg class="block h-[9px] w-[9px]" viewBox="0 0 9 9" aria-hidden="true"><path d="m.5.5 8 8m0-8-8 8" stroke="#666a72" stroke-width="1.300"/></svg></button></header>
  <div class="flex min-h-0 flex-1 flex-col border border-b-0 border-[#9297a6] p-[2px]">${body}</div>
  ${tabs(name)}
</section>`;

document.body.insertAdjacentHTML('beforeend', `
<div class="flex min-w-0 flex-1 gap-1">
${panel('Data', scroller(tree(dataRows, { h: 18, name: 'a', above: 1, open: [1] }), [6, 237, 427], [124, 141], 'border border-t-[#84848a] border-l-[#84848a] border-r-white border-b-white'))}
${panel('Display', scroller(tree(displayRows, { h: 18, name: 'b', open: [0] }), [0, 451, 221], [235, 32], ''))}
</div>
<div class="flex min-w-0 flex-1 gap-1">
${panel('Views', views)}
${panel('Results', scroller(tree(resultRows, { h: 18, name: 'c', open: [0] }), [0, 609, 63], [246, 21], ''))}
</div>`);
document.querySelectorAll('[data-mixed]').forEach(b => { b.indeterminate = true; });
</script>
</body>
</html>
